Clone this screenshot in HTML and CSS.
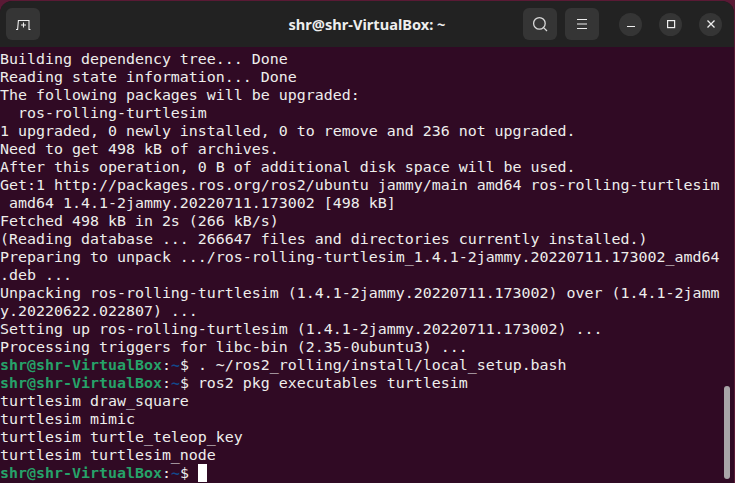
FILE: index.html
```html
<!DOCTYPE html>
<html lang="en">
<head>
<meta charset="utf-8">
<title>shr@shr-VirtualBox: ~</title>
<link rel="stylesheet" href="styles.css">
</head>
<body>
<div class="window">
  <header class="titlebar">
    <div class="bar-left">
      <button class="tool-btn" aria-label="New tab">
        <svg width="16" height="16" viewBox="0 0 16 16" fill="none" stroke="#eee" stroke-width="1.1"><path d="M1 13.5H2.6L3.4 4.5H14V13.5H15.5"/><path d="M8.5 6.5V11.5M6 9H11"/></svg>
      </button>
    </div>
    <div class="title">shr@shr-VirtualBox: ~</div>
    <div class="bar-right">
      <button class="tool-btn" aria-label="Search">
        <svg width="16" height="16" viewBox="0 0 16 16" fill="none" stroke="#d8d8d8" stroke-width="1.3"><circle cx="7.4" cy="7.4" r="5.8"/><path d="M11.6 11.6L15 15"/></svg>
      </button>
      <button class="tool-btn" aria-label="Menu">
        <svg width="12" height="12" viewBox="0 0 12 12" fill="none" stroke="#eee" stroke-width="1"><path d="M1 1.5H11M1 6H11M1 10.5H11"/></svg>
      </button>
      <div class="win-controls">
        <button class="win-btn" aria-label="Minimize"><svg width="10" height="10" viewBox="0 0 10 10" fill="none" stroke="#eee" stroke-width="1.2"><path d="M1 7.5H9"/></svg></button>
        <button class="win-btn" aria-label="Maximize"><svg width="10" height="10" viewBox="0 0 10 10" fill="none" stroke="#eee" stroke-width="1.2"><rect x="1.6" y="1.6" width="7" height="7"/></svg></button>
        <button class="win-btn" aria-label="Close"><svg width="10" height="10" viewBox="0 0 10 10" fill="none" stroke="#eee" stroke-width="1.3"><path d="M1.5 1.5L8.5 8.5M8.5 1.5L1.5 8.5"/></svg></button>
      </div>
    </div>
  </header>
  <main class="terminal">
    <div class="output">
      <div class="line">Building dependency tree... Done</div>
      <div class="line">Reading state information... Done</div>
      <div class="line">The following packages will be upgraded:</div>
      <div class="line">  ros-rolling-turtlesim</div>
      <div class="line">1 upgraded, 0 newly installed, 0 to remove and 236 not upgraded.</div>
      <div class="line">Need to get 498 kB of archives.</div>
      <div class="line">After this operation, 0 B of additional disk space will be used.</div>
      <div class="line">Get:1 http://packages.ros.org/ros2/ubuntu jammy/main amd64 ros-rolling-turtlesim</div>
      <div class="line"> amd64 1.4.1-2jammy.20220711.173002 [498 kB]</div>
      <div class="line">Fetched 498 kB in 2s (266 kB/s)</div>
      <div class="line">(Reading database ... 266647 files and directories currently installed.)</div>
      <div class="line">Preparing to unpack .../ros-rolling-turtlesim_1.4.1-2jammy.20220711.173002_amd64</div>
      <div class="line">.deb ...</div>
      <div class="line">Unpacking ros-rolling-turtlesim (1.4.1-2jammy.20220711.173002) over (1.4.1-2jamm</div>
      <div class="line">y.20220622.022807) ...</div>
      <div class="line">Setting up ros-rolling-turtlesim (1.4.1-2jammy.20220711.173002) ...</div>
      <div class="line">Processing triggers for libc-bin (2.35-0ubuntu3) ...</div>
      <div class="line"><span class="user">shr@shr-VirtualBox</span>:<span class="path">~</span>$ . ~/ros2_rolling/install/local_setup.bash</div>
      <div class="line"><span class="user">shr@shr-VirtualBox</span>:<span class="path">~</span>$ ros2 pkg executables turtlesim</div>
      <div class="line">turtlesim draw_square</div>
      <div class="line">turtlesim mimic</div>
      <div class="line">turtlesim turtle_teleop_key</div>
      <div class="line">turtlesim turtlesim_node</div>
      <div class="line"><span class="user">shr@shr-VirtualBox</span>:<span class="path">~</span>$ <span class="cursor"></span></div>
    </div>
    <div class="scrollbar"></div>
  </main>
</div>
</body>
</html>
```
FILE: styles.css
```css
* { box-sizing: border-box; }
html, body { margin: 0; height: 100%; }
body { background: #5a1a35; overflow: hidden; }
.window {
  width: 734px;
  height: 483px;
  margin-top: 1px;
  border-radius: 12px 12px 0 0;
  overflow: hidden;
  display: flex;
  flex-direction: column;
  background: #300a24;
}
.titlebar {
  height: 46px;
  flex: none;
  background: #222222;
  display: flex;
  align-items: center;
  justify-content: space-between;
  padding: 0 12px 0 6px;
  position: relative;
}
.bar-left, .bar-right { display: flex; align-items: center; }
.bar-right { gap: 8px; }
.tool-btn {
  width: 34px;
  height: 32px;
  padding: 0;
  border: 0;
  border-radius: 6px;
  background: #353535;
  display: flex;
  align-items: center;
  justify-content: center;
}
.title {
  position: absolute;
  left: 0;
  right: 0;
  text-align: center;
  color: #eeeeee;
  font: 700 14.6px/1 "Noto Sans", "Open Sans", sans-serif;
}
.win-controls { display: flex; gap: 17px; margin-left: 12px; }
.win-btn {
  width: 23px;
  height: 23px;
  padding: 0;
  border: 0;
  border-radius: 50%;
  background: #353535;
  display: flex;
  align-items: center;
  justify-content: center;
}
.terminal { position: relative; flex: 1; overflow: hidden; padding-top: 3px; }
.output {
  color: #eeeeec;
  font: 14.95px/18px "DejaVu Sans Mono", monospace;
}
.line { height: 18px; white-space: pre; }
.user { color: #26a269; font-weight: 700; }
.path { color: #12488b; font-weight: 700; }
.cursor { display: inline-block; width: 9px; height: 18px; background: #ffffff; vertical-align: -4px; }
.scrollbar {
  position: absolute;
  right: 4px;
  top: 339px;
  width: 6px;
  height: 93px;
  border-radius: 3px;
  background: #a9a5a8;
}
```
